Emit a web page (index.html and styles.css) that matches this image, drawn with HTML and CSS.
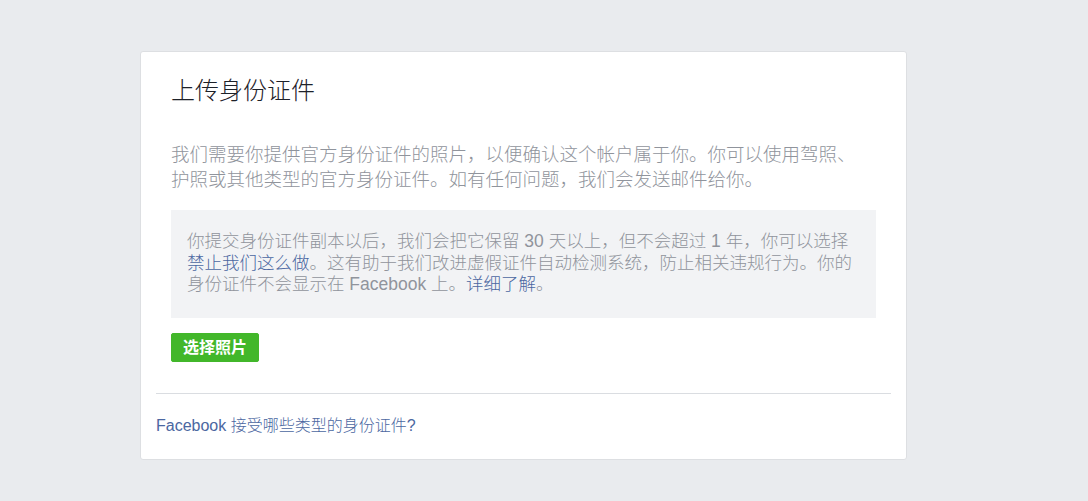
FILE: index.html
```html
<!DOCTYPE html>
<html lang="zh-CN">
<head>
<meta charset="utf-8">
<title>上传身份证件</title>
<link rel="stylesheet" href="styles.css">
</head>
<body>
<div class="page">
  <div class="card">
    <div class="content">
      <h1 class="title">上传身份证件</h1>
      <p class="intro">我们需要你提供官方身份证件的照片，以便确认这个帐户属于你。你可以使用驾照、<br>护照或其他类型的官方身份证件。如有任何问题，我们会发送邮件给你。</p>
      <div class="notice">你提交身份证件副本以后，我们会把它保留 30 天以上，但不会超过 1 年，你可以选择<br><a class="link" href="#">禁止我们这么做</a>。这有助于我们改进虚假证件自动检测系统，防止相关违规行为。你的<br>身份证件不会显示在 Facebook 上。<a class="link" href="#">详细了解</a>。</div>
      <button class="btn" type="button">选择照片</button>
    </div>
    <div class="divider"></div>
    <a class="footer-link" href="#">Facebook 接受哪些类型的身份证件?</a>
  </div>
</div>
</body>
</html>
```

FILE: styles.css
```css
html, body {
  margin: 0;
  padding: 0;
}
body {
  background: #e9ebee;
  font-family: "Liberation Sans", "Noto Sans CJK SC", sans-serif;
  width: 1088px;
  height: 501px;
  overflow: hidden;
}
.page {
  padding: 51px 0 0 140px;
}
.card {
  background: #fff;
  border: 1px solid #dddfe2;
  border-radius: 3px;
  padding: 0 15px 23px;
  box-sizing: content-box;
  width: 735px;
}
.content {
  padding: 24px 15px 0;
}
.title {
  margin: 0;
  font-weight: 300;
  font-size: 24px;
  line-height: 30px;
  color: #1d2129;
}
.intro {
  margin: 36px 0 0;
  font-size: 18.5px;
  font-weight: 300;
  line-height: 25px;
  color: #90949c;
  white-space: nowrap;
}
.notice {
  margin-top: 18px;
  background: #f2f3f5;
  padding: 21px 16px 22px;
  font-size: 17.5px;
  font-weight: 300;
  line-height: 21.5px;
  color: #90949c;
  white-space: nowrap;
}
.link {
  color: #4b67a1;
  font-weight: 300;
  text-decoration: none;
}
.btn {
  display: block;
  margin-top: 15px;
  height: 29px;
  width: 88px;
  padding: 0;
  border: 1px solid #42b72a;
  border-radius: 2px;
  background: #42b72a;
  color: #fff;
  font-family: "Liberation Sans", "Noto Sans CJK SC", sans-serif;
  font-size: 16px;
  font-weight: bold;
  line-height: 27px;
  text-align: center;
}
.divider {
  margin-top: 31px;
  height: 1px;
  background: #dadde1;
}
.footer-link {
  display: block;
  margin-top: 22px;
  font-size: 16px;
  font-weight: 300;
  line-height: 20px;
  color: #4b67a1;
  text-decoration: none;
}
```
